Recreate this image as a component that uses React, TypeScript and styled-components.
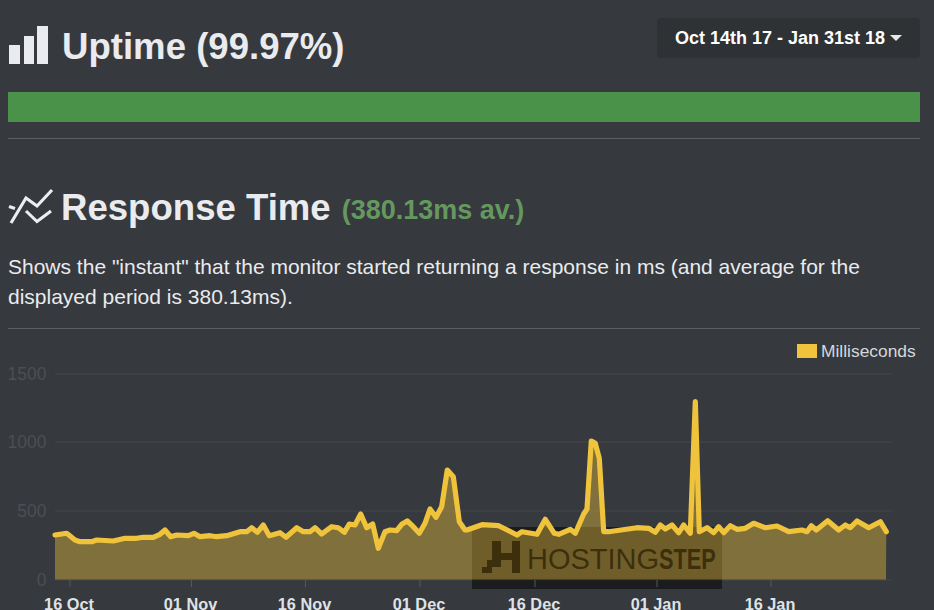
import styled, { createGlobalStyle } from "styled-components";

const GlobalStyle = createGlobalStyle`
  html, body {
    margin: 0;
    padding: 0;
    background: #36393d;
  }
`;

// traced from the chart, [x, y] in page pixels
const fromCrop = (pts: number[][], offset: number) =>
  pts.map(([x, y]) => [offset + x / 3, 360 + y / 3]);

const series = [
  ...fromCrop(
    [
      [165, 525], [200, 520], [225, 540], [240, 545], [275, 545], [290, 540], [340, 543], [375, 535],
      [410, 535], [430, 532], [460, 532], [480, 523], [495, 510], [512, 530], [530, 525], [565, 527],
      [582, 520], [600, 530], [630, 527], [650, 530], [680, 527], [720, 515], [740, 515], [755, 503],
      [772, 517], [790, 495], [808, 527], [840, 518], [858, 532], [890, 503], [910, 515], [930, 515],
      [945, 503], [965, 522], [995, 500], [1015, 503], [1033, 517], [1048, 492], [1065, 495], [1082, 462],
      [1100, 503], [1118, 492], [1135, 565], [1155, 515], [1170, 510], [1190, 512], [1205, 493], [1222, 483],
      [1240, 500], [1258, 520], [1275, 490], [1290, 447], [1308, 472], [1325, 440], [1342, 330], [1360, 350],
      [1378, 485], [1395, 510],
    ],
    0
  ),
  ...fromCrop(
    [
      [0, 510], [45, 494], [95, 497], [150, 525], [165, 515], [210, 523], [235, 478], [262, 520],
      [275, 523], [310, 508], [325, 520], [350, 462], [360, 447], [373, 243], [385, 250], [397, 295],
      [410, 515], [425, 515], [510, 503], [545, 505], [565, 517], [580, 495], [595, 507], [615, 495],
      [635, 518], [650, 495], [670, 520], [685, 125], [697, 515], [720, 503], [740, 518], [755, 500],
      [770, 518], [790, 497], [810, 508], [835, 505], [860, 490], [895, 503], [930, 498], [965, 515],
      [1005, 510], [1020, 515], [1033, 497], [1048, 510], [1082, 482], [1115, 510], [1135, 495], [1150, 503],
      [1170, 483], [1205, 503], [1240, 485], [1258, 515],
    ],
    467
  ),
];

const linePoints = series.map(([x, y]) => `${x.toFixed(1)},${y.toFixed(1)}`).join(" ");
const areaPoints = `55,579.5 ${linePoints} 886,579.5`;

const yAxis = [
  { label: "1500", y: 374 },
  { label: "1000", y: 442 },
  { label: "500", y: 511 },
  { label: "0", y: 580 },
];

const xAxis = [
  { label: "16 Oct", x: 70 },
  { label: "01 Nov", x: 191.5 },
  { label: "16 Nov", x: 305.5 },
  { label: "01 Dec", x: 420 },
  { label: "16 Dec", x: 535 },
  { label: "01 Jan", x: 657 },
  { label: "16 Jan", x: 771 },
];

const App = () => {
  return (
    <Page>
      <GlobalStyle />
      <Section>
        <TopRow>
          <Title>
            <BarsIcon viewBox="0 0 40 38" fill="#e9ebef">
              <rect x="0" y="19" width="11" height="19" />
              <rect x="15" y="10" width="10" height="28" />
              <rect x="28" y="0" width="11" height="38" />
            </BarsIcon>
            <TitleText>Uptime (99.97%)</TitleText>
          </Title>
          <DateButton>
            Oct 14th 17 - Jan 31st 18
            <Caret />
          </DateButton>
        </TopRow>
        <UptimeBar />
        <Divider />
        <ResponseTitle>
          <TrendIcon viewBox="0 0 46 38" fill="none" stroke="#eceef1" strokeWidth="3.1">
            <path d="M3 35 L18 10 L29 18 L44 2" />
            <path d="M18 23 L29 33.5 L43 23" />
            <path d="M1 18.5 L7 20.5" />
          </TrendIcon>
          <ResponseText>Response Time</ResponseText>
          <Average>(380.13ms av.)</Average>
        </ResponseTitle>
        <Description>
          Shows the "instant" that the monitor started returning a response in ms (and average for the displayed period
          is 380.13ms).
        </Description>
        <Divider />
      </Section>
      <ChartBox>
        <Legend>
          <Swatch />
          Milliseconds
        </Legend>
        <ChartSvg viewBox="0 329 934 281">
          {yAxis.map((t) => (
            <g key={t.label}>
              <line x1="55" x2="892" y1={t.y} y2={t.y} stroke="#44474b" strokeWidth="1" />
              <YLabel x="46.5" y={t.y + 6}>
                {t.label}
              </YLabel>
            </g>
          ))}
          <rect x="472" y="527" width="250" height="62" fill="#000" fillOpacity="0.5" />
          {xAxis.map((t) => (
            <g key={t.label}>
              <line x1={t.x} x2={t.x} y1="580" y2="587" stroke="#55585c" strokeWidth="1" />
              <XLabel x={t.x - 1} y="610">
                {t.label}
              </XLabel>
            </g>
          ))}
          <polygon points={areaPoints} fill="#f0c33c" fillOpacity="0.4" />
          <polyline
            points={linePoints}
            fill="none"
            stroke="#f0c33c"
            strokeWidth="5.2"
            strokeLinejoin="round"
            strokeLinecap="round"
          />
        </ChartSvg>
        <Watermark>
          <LogoMark viewBox="0 0 38 32" fill="#3d2f0c">
            <path d="M10 0 H19 V12 H30 V0 H38 V32 H30 V19 H19 V26 H10 V32 H0 V26 H5 V19 H10 Z" />
          </LogoMark>
          <LogoThin>HOSTING</LogoThin>
          <LogoBold>STEP</LogoBold>
        </Watermark>
      </ChartBox>
    </Page>
  );
};

export default App;

const Page = styled.div`
  width: 934px;
  height: 610px;
  overflow: hidden;
  background: #36393d;
  color: #e9ebef;
  font-family: "Liberation Sans", Arial, sans-serif;
`;

const Section = styled.div`
  padding: 18px 14px 0 8px;
`;

const TopRow = styled.div`
  display: flex;
  align-items: center;
  justify-content: space-between;
  height: 40px;
  margin-bottom: 34px;
`;

const Title = styled.h1`
  display: flex;
  align-items: center;
  gap: 14px;
  margin: 0;
  font-size: 36.6px;
  font-weight: 700;
  line-height: 40px;
`;

const TitleText = styled.span`
  margin-top: 18px;
`;

const BarsIcon = styled.svg`
  width: 40px;
  height: 38px;
  margin: 14px -1px 0 1px;
`;

const DateButton = styled.button`
  display: flex;
  align-items: center;
  height: 40px;
  width: 263px;
  padding: 0 0 0 18px;
  border: none;
  border-radius: 4px;
  background: #2f3235;
  color: #ffffff;
  font-family: inherit;
  font-size: 18px;
  font-weight: 700;
`;

const Caret = styled.span`
  width: 0;
  height: 0;
  margin-left: 5px;
  border-left: 6px solid transparent;
  border-right: 6px solid transparent;
  border-top: 6px solid #e8e8e8;
`;

const UptimeBar = styled.div`
  height: 30px;
  background: #4a9249;
`;

const Divider = styled.hr`
  height: 1px;
  margin: 16px 0 0;
  border: none;
  background: #5c5f62;
`;

const ResponseTitle = styled.h2`
  display: flex;
  align-items: center;
  margin: 47px 0 0;
  height: 42px;
  font-size: 36.6px;
  font-weight: 700;
`;

const ResponseText = styled.span`
  margin-top: 2px;
`;

const TrendIcon = styled.svg`
  width: 46px;
  height: 38px;
  margin-right: 7px;
`;

const Average = styled.small`
  margin: 6px 0 0 11px;
  color: #65985f;
  font-size: 27px;
  font-weight: 700;
`;

const Description = styled.p`
  margin: 24px 0 0;
  font-size: 21px;
  line-height: 30px;
`;

const ChartBox = styled.div`
  position: relative;
  height: 281px;
`;

const ChartSvg = styled.svg`
  display: block;
  width: 934px;
  height: 281px;
`;

const Legend = styled.div`
  position: absolute;
  top: 13px;
  left: 797px;
  display: flex;
  align-items: center;
  gap: 4px;
  color: #d5d8dc;
  font-size: 17.4px;
  line-height: 18px;
`;

const Swatch = styled.span`
  width: 20px;
  height: 14px;
  background: #f0c33c;
`;

const YLabel = styled.text`
  fill: #4c4f53;
  font-size: 17.5px;
  text-anchor: end;
`;

const XLabel = styled.text`
  fill: #dfe2e6;
  font-size: 16.3px;
  font-weight: 700;
  text-anchor: middle;
`;

const Watermark = styled.div`
  position: absolute;
  top: 212px;
  left: 482px;
  display: flex;
  align-items: flex-start;
  color: #3d2f0c;
  font-size: 29px;
  line-height: 32px;
`;

const LogoMark = styled.svg`
  width: 38px;
  height: 32px;
  margin-right: 7px;
`;

const LogoThin = styled.span`
  margin-top: 2px;
`;

const LogoBold = styled.span`
  margin-top: 2px;
  font-weight: 700;
  transform: scaleX(0.75);
  transform-origin: left center;
`;
